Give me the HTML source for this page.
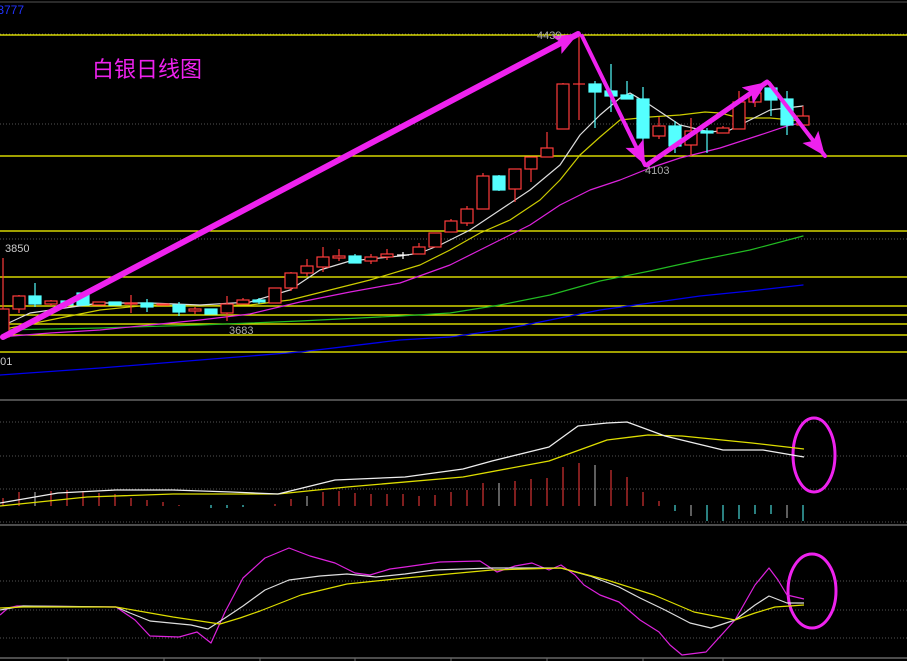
<!DOCTYPE html>
<html><head><meta charset="utf-8"><style>
html,body{margin:0;padding:0;background:#000;width:907px;height:661px;overflow:hidden}
svg{display:block}
text{font-family:"Liberation Sans",sans-serif}
</style></head><body>
<svg width="907" height="661" viewBox="0 0 907 661" xmlns="http://www.w3.org/2000/svg">
<defs>
<marker id="ah" markerUnits="userSpaceOnUse" markerWidth="30" markerHeight="24" refX="24" refY="10" orient="auto">
<path d="M0,0 L24,10 L0,20 L5,10 Z" fill="#ee22ee"/>
</marker>
</defs>
<rect width="907" height="661" fill="#000"/>
<line x1="0" y1="2" x2="907" y2="2" stroke="#555" stroke-width="1"/>
<!-- dotted grid -->
<g stroke="#555" stroke-dasharray="1,2" stroke-width="1">
<line x1="0" y1="34" x2="907" y2="34"/><line x1="0" y1="124" x2="907" y2="124"/><line x1="0" y1="239" x2="907" y2="239"/>
<line x1="0" y1="422" x2="907" y2="422"/><line x1="0" y1="456" x2="907" y2="456"/><line x1="0" y1="489" x2="907" y2="489"/><line x1="0" y1="522" x2="907" y2="522"/>
<line x1="0" y1="581" x2="907" y2="581"/><line x1="0" y1="610" x2="907" y2="610"/><line x1="0" y1="638" x2="907" y2="638"/>
</g>
<g stroke="#666" stroke-width="1.5">
<line x1="0" y1="400" x2="907" y2="400"/><line x1="0" y1="525" x2="907" y2="525"/><line x1="0" y1="658" x2="907" y2="658"/>
</g>
<g stroke="#666"><line x1="68" y1="658" x2="68" y2="661"/><line x1="164" y1="658" x2="164" y2="661"/><line x1="260" y1="658" x2="260" y2="661"/><line x1="355" y1="658" x2="355" y2="661"/><line x1="451" y1="658" x2="451" y2="661"/><line x1="547" y1="658" x2="547" y2="661"/><line x1="643" y1="658" x2="643" y2="661"/><line x1="723" y1="658" x2="723" y2="661"/></g>
<!-- yellow lines -->
<g stroke="#ffff00" stroke-width="1.2">
<line x1="0" y1="35" x2="907" y2="35"/><line x1="0" y1="156" x2="907" y2="156"/><line x1="0" y1="231" x2="907" y2="231"/><line x1="0" y1="277" x2="907" y2="277"/><line x1="0" y1="306" x2="907" y2="306"/><line x1="0" y1="315" x2="907" y2="315"/><line x1="0" y1="324" x2="907" y2="324"/><line x1="0" y1="335" x2="907" y2="335"/><line x1="0" y1="352" x2="907" y2="352"/>
</g>
<!-- MAs -->
<g fill="none" stroke-linejoin="round" stroke-linecap="round">
<polyline stroke="#0000ee" stroke-width="1.3" points="0,375 100,368 200,360 300,352 400,340 450,337 500,330 550,320 600,310 650,303 700,296 750,291 803,285"/>
<polyline stroke="#22bb22" stroke-width="1.2" points="0,330 100,328 200,325 300,321 400,316 450,313 500,305 550,295 600,281 650,271 700,260 750,250 803,236"/>
<polyline stroke="#dd22dd" stroke-width="1.2" points="0,337 50,333 100,330 150,325 200,320 250,314 300,302 350,292 400,283 450,265 480,250 500,240 530,225 560,205 590,190 620,180 650,168 680,158 720,148 760,135 790,125 803,123"/>
<polyline stroke="#cccc00" stroke-width="1.2" points="0,330 50,320 100,310 150,305 200,306 250,305 290,300 330,290 370,280 420,265 450,250 480,233 510,220 540,200 560,180 580,155 600,137 620,120 650,117 680,115 705,112 720,113 740,118 770,118 803,121"/>
<polyline stroke="#dddddd" stroke-width="1.2" points="0,327 30,313 100,303 150,303 200,305 250,302 290,290 320,270 350,261 400,256 420,253 440,245 470,230 500,210 530,190 560,165 580,135 600,115 620,98 630,93 650,105 680,125 710,132 730,130 750,120 770,110 803,106"/>
</g>
<!-- candles -->
<g stroke="#ff3b3b" stroke-width="1.2" fill="#000">
<line x1="3" y1="258" x2="3" y2="337"/><rect x="-3" y="309" width="12" height="28"/>
<line x1="19" y1="295" x2="19" y2="313"/><rect x="13" y="296" width="12" height="13"/>
<line x1="51" y1="300" x2="51" y2="306"/><rect x="45" y="301" width="12" height="3"/>
<rect x="93" y="302" width="12" height="3"/>
<line x1="131" y1="295" x2="131" y2="313"/><rect x="125" y="303" width="12" height="1"/>
<rect x="157" y="304" width="12" height="1"/>
<line x1="195" y1="307" x2="195" y2="314"/><rect x="189" y="309" width="12" height="2"/>
<line x1="227" y1="296" x2="227" y2="321"/><rect x="221" y="304" width="12" height="9"/>
<line x1="243" y1="298" x2="243" y2="304"/><rect x="237" y="300" width="12" height="4"/>
<rect x="269" y="288" width="12" height="15"/>
<line x1="291" y1="272" x2="291" y2="291"/><rect x="285" y="273" width="12" height="15"/>
<line x1="307" y1="259" x2="307" y2="276"/><rect x="301" y="266" width="12" height="7"/>
<line x1="323" y1="247" x2="323" y2="272"/><rect x="317" y="257" width="12" height="10"/>
<line x1="339" y1="249" x2="339" y2="261"/><rect x="333" y="256" width="12" height="2"/>
<line x1="371" y1="254" x2="371" y2="264"/><rect x="365" y="257" width="12" height="4"/>
<line x1="387" y1="249" x2="387" y2="260"/><rect x="381" y="254" width="12" height="3"/>
<line x1="419" y1="243" x2="419" y2="254"/><rect x="413" y="247" width="12" height="7"/>
<rect x="429" y="233" width="12" height="14"/>
<line x1="451" y1="219" x2="451" y2="232"/><rect x="445" y="221" width="12" height="11"/>
<line x1="467" y1="206" x2="467" y2="226"/><rect x="461" y="209" width="12" height="14"/>
<line x1="483" y1="173" x2="483" y2="209"/><rect x="477" y="176" width="12" height="33"/>
<line x1="515" y1="169" x2="515" y2="202"/><rect x="509" y="169" width="12" height="20"/>
<line x1="531" y1="157" x2="531" y2="182"/><rect x="525" y="157" width="12" height="12"/>
<line x1="547" y1="132" x2="547" y2="157"/><rect x="541" y="148" width="12" height="9"/>
<line x1="563" y1="83" x2="563" y2="129"/><rect x="557" y="84" width="12" height="45"/>
<line x1="579" y1="33" x2="579" y2="120"/><line x1="573" y1="84" x2="585" y2="84"/>
<line x1="659" y1="117" x2="659" y2="139"/><rect x="653" y="126" width="12" height="10"/>
<line x1="691" y1="118" x2="691" y2="156"/><rect x="685" y="131" width="12" height="14"/>
<line x1="723" y1="126" x2="723" y2="133"/><rect x="717" y="128" width="12" height="5"/>
<line x1="739" y1="91" x2="739" y2="129"/><rect x="733" y="102" width="12" height="27"/>
<line x1="755" y1="87" x2="755" y2="107"/><rect x="749" y="93" width="12" height="9"/>
<line x1="803" y1="106" x2="803" y2="126"/><rect x="797" y="116" width="12" height="9"/>
</g>
<g stroke="#54ffff" stroke-width="1.2" fill="#54ffff">
<line x1="35" y1="283" x2="35" y2="307"/><rect x="29" y="296" width="12" height="8"/>
<rect x="61" y="301" width="12" height="4"/>
<rect x="77" y="293" width="12" height="12"/>
<rect x="109" y="302" width="12" height="3"/>
<line x1="147" y1="299" x2="147" y2="312"/><rect x="141" y="303" width="12" height="4"/>
<line x1="179" y1="302" x2="179" y2="316"/><rect x="173" y="305" width="12" height="7"/>
<rect x="205" y="309" width="12" height="5"/>
<line x1="259" y1="298" x2="259" y2="304"/><rect x="253" y="300" width="12" height="2"/>
<line x1="355" y1="254" x2="355" y2="263"/><rect x="349" y="256" width="12" height="7"/>
<line x1="499" y1="175" x2="499" y2="191"/><rect x="493" y="176" width="12" height="14"/>
<line x1="595" y1="81" x2="595" y2="128"/><rect x="589" y="84" width="12" height="8"/>
<line x1="611" y1="64" x2="611" y2="112"/><rect x="605" y="91" width="12" height="5"/>
<line x1="627" y1="81" x2="627" y2="99"/><rect x="621" y="95" width="12" height="4"/>
<line x1="643" y1="87" x2="643" y2="150"/><rect x="637" y="99" width="12" height="39"/>
<line x1="675" y1="121" x2="675" y2="153"/><rect x="669" y="126" width="12" height="20"/>
<line x1="707" y1="128" x2="707" y2="153"/><rect x="701" y="131" width="12" height="2"/>
<line x1="771" y1="83" x2="771" y2="116"/><rect x="765" y="88" width="12" height="12"/>
<line x1="787" y1="91" x2="787" y2="135"/><rect x="781" y="99" width="12" height="26"/>
</g>
<g stroke="#fff" stroke-width="1.2"><line x1="397" y1="255" x2="409" y2="255"/><line x1="403" y1="252" x2="403" y2="259"/></g>
<!-- arrows -->
<g stroke="#ee22ee" stroke-linecap="round" fill="none">
<line x1="3" y1="337" x2="578" y2="34" stroke-width="6" marker-end="url(#ah)"/>
<line x1="582" y1="36" x2="645" y2="165" stroke-width="4" marker-end="url(#ah)"/>
<line x1="647" y1="165" x2="767" y2="82" stroke-width="5" marker-end="url(#ah)"/>
<line x1="769" y1="83" x2="825" y2="156" stroke-width="4" marker-end="url(#ah)"/>
<ellipse cx="814" cy="455" rx="21" ry="37" stroke-width="3"/>
<ellipse cx="812" cy="591" rx="24" ry="37" stroke-width="3"/>
</g>
<!-- labels -->
<text x="-6" y="14" fill="#2233ff" font-size="12">:3777</text>
<text x="92" y="77" fill="#ee22ee" font-size="22" font-family="'Liberation Sans','Noto Sans CJK SC',sans-serif">白银日线图</text>
<text x="537" y="39" fill="#aaa" font-size="11">4439</text>
<text x="645" y="174" fill="#aaa" font-size="11">4103</text>
<text x="5" y="252" fill="#ccc" font-size="11">3850</text>
<text x="229" y="334" fill="#aaa" font-size="11">3683</text>
<text x="-6" y="365" fill="#ccc" font-size="11">601</text>
<!-- MACD histogram -->
<g stroke="#ff3b3b" stroke-width="1">
<line x1="3" y1="498" x2="3" y2="506"/><line x1="19" y1="492" x2="19" y2="506"/><line x1="35" y1="492" x2="35" y2="506" stroke="#bbb"/><line x1="51" y1="491" x2="51" y2="506"/><line x1="67" y1="490" x2="67" y2="506"/><line x1="83" y1="491" x2="83" y2="506"/><line x1="99" y1="493" x2="99" y2="506"/><line x1="115" y1="494" x2="115" y2="506"/><line x1="131" y1="498" x2="131" y2="506"/><line x1="147" y1="500" x2="147" y2="506"/><line x1="163" y1="502" x2="163" y2="506"/><line x1="179" y1="505" x2="179" y2="506"/>
<line x1="275" y1="504" x2="275" y2="506"/><line x1="291" y1="499" x2="291" y2="506"/><line x1="307" y1="496" x2="307" y2="506" stroke="#bbb"/><line x1="323" y1="492" x2="323" y2="506"/><line x1="339" y1="491" x2="339" y2="506"/><line x1="355" y1="493" x2="355" y2="506"/><line x1="371" y1="494" x2="371" y2="506"/><line x1="387" y1="494" x2="387" y2="506"/><line x1="403" y1="494" x2="403" y2="506"/><line x1="419" y1="496" x2="419" y2="506"/><line x1="435" y1="495" x2="435" y2="506"/><line x1="451" y1="492" x2="451" y2="506"/><line x1="467" y1="490" x2="467" y2="506"/><line x1="483" y1="483" x2="483" y2="506"/><line x1="499" y1="483" x2="499" y2="506" stroke="#bbb"/><line x1="515" y1="481" x2="515" y2="506"/><line x1="531" y1="479" x2="531" y2="506"/><line x1="547" y1="478" x2="547" y2="506"/><line x1="563" y1="467" x2="563" y2="506"/><line x1="579" y1="463" x2="579" y2="506"/><line x1="595" y1="465" x2="595" y2="506" stroke="#bbb"/><line x1="611" y1="470" x2="611" y2="506"/><line x1="627" y1="477" x2="627" y2="506"/><line x1="643" y1="492" x2="643" y2="506"/><line x1="659" y1="501" x2="659" y2="506"/>
</g>
<g stroke="#54ffff" stroke-width="1">
<line x1="211" y1="505" x2="211" y2="508"/><line x1="227" y1="505" x2="227" y2="508"/><line x1="243" y1="505" x2="243" y2="507"/>
<line x1="675" y1="505" x2="675" y2="511"/><line x1="691" y1="505" x2="691" y2="516" stroke="#bbb"/><line x1="707" y1="505" x2="707" y2="521"/><line x1="723" y1="505" x2="723" y2="521"/><line x1="739" y1="505" x2="739" y2="519"/><line x1="755" y1="505" x2="755" y2="514"/><line x1="771" y1="505" x2="771" y2="514"/><line x1="787" y1="505" x2="787" y2="518" stroke="#bbb"/><line x1="803" y1="505" x2="803" y2="521"/>
</g>
<g fill="none" stroke-linejoin="round" stroke-width="1.3">
<polyline stroke="#dddd00" points="0,506 87,497 173,494 278,494 347,487 463,477 549,461 607,440 648,435 682,436 752,443 804,449"/>
<polyline stroke="#eeeeee" points="0,503 58,493 116,490 173,490 231,492 278,494 335,480 405,477 463,469 492,461 549,447 578,426 607,423 627,422 665,436 723,450 763,450 804,457"/>
</g>
<!-- KDJ -->
<g fill="none" stroke-linejoin="round" stroke-width="1.2">
<polyline stroke="#dd22dd" points="0,615 8,608 17,606 116,607 135,620 150,636 179,637 197,632 211,643 225,612 243,578 265,558 289,548 310,556 335,563 355,573 370,575 390,569 405,567 440,562 480,561 497,572 515,566 532,563 549,570 561,565 575,575 584,585 600,595 619,602 640,620 659,632 670,645 682,655 706,652 735,620 755,585 769,568 778,580 787,595 804,599"/>
<polyline stroke="#dddddd" points="0,610 23,606 116,607 130,613 150,621 191,625 208,629 225,618 243,606 265,590 289,580 320,576 347,574 376,577 405,574 434,570 492,568 530,568 561,568 590,576 619,587 640,598 665,610 690,623 711,628 735,620 755,605 769,596 787,603 804,603"/>
<polyline stroke="#dddd00" points="0,608 23,607 116,607 133,610 173,617 220,624 240,618 260,611 301,595 347,584 405,578 492,570 561,568 607,580 654,595 694,612 735,620 755,613 775,607 804,605"/>
</g>
</svg>
</body></html>
